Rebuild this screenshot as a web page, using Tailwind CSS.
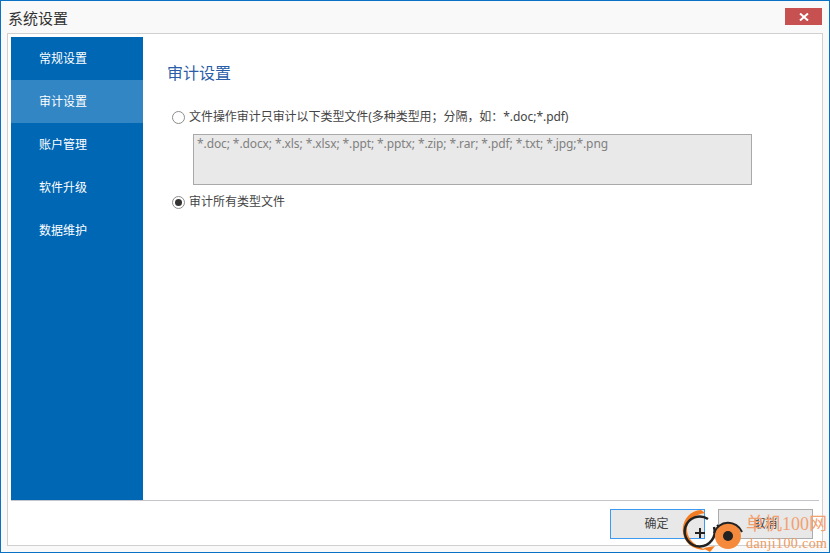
<!DOCTYPE html>
<html lang="zh-CN">
<head>
<meta charset="UTF-8">
<title>系统设置</title>
<script src="https://cdn.jsdelivr.net/npm/@tailwindcss/browser@4"></script>
</head>
<body class="m-0 overflow-hidden">
<div class="relative w-[830px] h-[553px] flex flex-col bg-[#f9f9f9] border border-[#0a72c6] font-['Noto_Sans','Noto_Sans_CJK_SC',sans-serif] text-[12px] text-[#444]">
  <!-- Title bar -->
  <div class="h-[32px] shrink-0 flex justify-between pl-[7px] pr-[7px]">
    <span class="text-[15px] leading-[34px] text-[#333]">系统设置</span>
    <button class="w-[37px] h-[17px] mt-[7px] bg-[#c75050] flex items-center justify-center">
      <svg class="w-[10px] h-[8px]" viewBox="0 0 10 8"><path d="M1 .5 9 7.5M9 .5 1 7.5" stroke="#fff" stroke-width="2"/></svg>
    </button>
  </div>
  <!-- Body -->
  <div class="flex-1 mx-[6px] mb-[6px] bg-white border border-[#d0d0d0] p-[3px] flex flex-col">
    <div class="flex-1 flex border-b border-[#c4c4cc]">
      <!-- Sidebar -->
      <nav class="w-[132px] bg-[#0067b5] text-white flex flex-col">
        <a class="h-[43px] pl-[28px] leading-[44px]">常规设置</a>
        <a class="h-[43px] pl-[28px] leading-[44px] bg-[#3386c4]">审计设置</a>
        <a class="h-[43px] pl-[28px] leading-[44px]">账户管理</a>
        <a class="h-[43px] pl-[28px] leading-[44px]">软件升级</a>
        <a class="h-[43px] pl-[28px] leading-[44px]">数据维护</a>
      </nav>
      <!-- Content -->
      <div class="flex-1 pl-[24px]">
        <h2 class="mt-[24px] text-[16px] leading-[24px] text-[#2a5da8]">审计设置</h2>
        <label class="mt-[23px] ml-[5px] flex items-center h-[18px]">
          <span class="w-[13px] h-[13px] rounded-full border border-[#8c8c8c] bg-white shrink-0"></span>
          <span class="ml-[4px] whitespace-nowrap tracking-[-0.05px]">文件操作审计只审计以下类型文件(多种类型用；分隔，如：*.doc;*.pdf)</span>
        </label>
        <div class="mt-[8px] ml-[26px] w-[559px] h-[51px] bg-[#e9e9e9] border border-[#a9a9a9] px-[3px] pt-[1px] text-[12px] leading-[16px] tracking-[-0.1px] text-[#808080]">*.doc; *.docx; *.xls; *.xlsx; *.ppt; *.pptx; *.zip; *.rar; *.pdf; *.txt; *.jpg;*.png</div>
        <label class="mt-[8px] ml-[5px] flex items-center h-[18px]">
          <span class="w-[13px] h-[13px] rounded-full border border-[#8c8c8c] bg-white shrink-0 flex items-center justify-center"><span class="w-[7px] h-[7px] rounded-full bg-[#333]"></span></span>
          <span class="ml-[4px]">审计所有类型文件</span>
        </label>
      </div>
    </div>
    <!-- Footer -->
    <div class="h-[41px] shrink-0 flex justify-end gap-[13px] pt-[8px] pr-[6px]">
      <button class="w-[95px] h-[30px] pr-[2px] bg-[#e8e8e8] border border-[#3c9bf0] text-[#444]">确定</button>
      <button class="w-[95px] h-[30px] bg-[#e8e8e8] border border-[#acacac] text-[#444]">取消</button>
    </div>
  </div>
  <!-- Watermark -->
  <svg class="absolute left-[680px] top-[507px] w-[70px] h-[46px]" viewBox="0 0 70 46" fill="none">
    <path d="M20 2C7 3 1 14 2 24 3 35 12 42 25 42 15 38 7 32 6 23 5 14 11 7 24 5Z" fill="#f47c20"/>
    <path d="M22 40 34 38 29 44Z" fill="#f47c20"/>
    <path d="M27 11A15 15 0 1 0 33 19" stroke="#222" stroke-width="2.5"/>
    <path d="M14 25H24M19 20V30" stroke="#222" stroke-width="2"/>
    <path d="M36 17C39 20 40 22 40 25" stroke="#222" stroke-width="2"/>
    <circle cx="47" cy="28" r="13" fill="#f58a3c"/>
    <path d="M33 25A15 15 0 0 1 61 24" stroke="#222" stroke-width="2"/>
    <circle cx="47" cy="28" r="5" fill="#222"/>
  </svg>
  <span class="absolute left-[745px] top-[511px] whitespace-nowrap text-[18px] leading-[24px] text-[#f2a070] font-['Liberation_Serif','Noto_Sans_CJK_SC',serif]">单机100网</span>
  <span class="absolute left-[745px] top-[535px] whitespace-nowrap text-[14px] leading-[16px] tracking-[0.4px] text-[#ee9a62] font-['Liberation_Serif',serif]">danji100.com</span>
</div>
</body>
</html>
